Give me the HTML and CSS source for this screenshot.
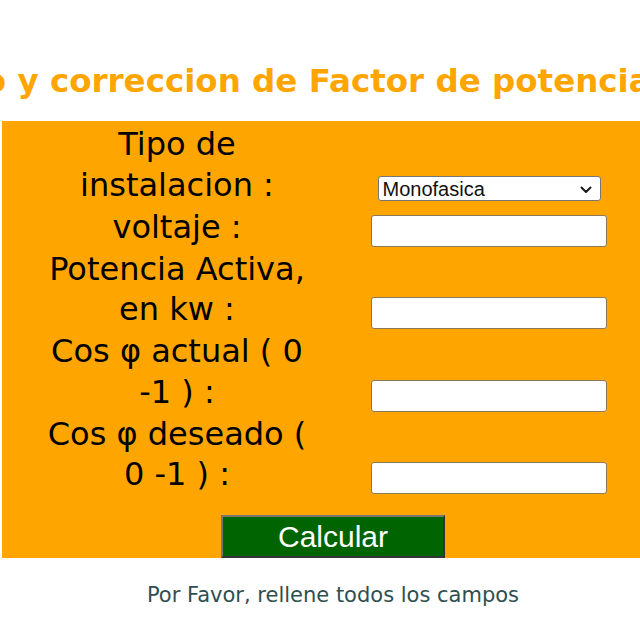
FILE: index.html
```html
<!DOCTYPE html>
<html lang="es">
<head>
<meta charset="utf-8">
<title>Calculo y correccion de Factor de potencia</title>
<link rel="stylesheet" href="styles.css">
</head>
<body>
<div class="page">
  <div class="head">
    <h1 class="title">Calculo y correccion de Factor de potencia</h1>
  </div>
  <form class="calc">
    <div class="row">
      <label class="lbl" for="tipo">Tipo de instalacion :</label>
      <div class="field select-wrap">
        <select id="tipo" class="sel"><option>Monofasica</option><option>Trifasica</option></select>
        <svg class="chev" width="12" height="8" viewBox="0 0 12 8" aria-hidden="true"><path d="M1.5 1.5 L6 6 L10.5 1.5" fill="none" stroke="#1a1a1a" stroke-width="2" stroke-linecap="round" stroke-linejoin="round"/></svg>
      </div>
    </div>
    <div class="row">
      <label class="lbl" for="volt">voltaje :</label>
      <div class="field"><input id="volt" class="inp" type="text"></div>
    </div>
    <div class="row">
      <label class="lbl" for="pot">Potencia Activa, en kw :</label>
      <div class="field"><input id="pot" class="inp" type="text"></div>
    </div>
    <div class="row">
      <label class="lbl" for="cosa">Cos φ actual ( 0 -1 ) :</label>
      <div class="field"><input id="cosa" class="inp" type="text"></div>
    </div>
    <div class="row">
      <label class="lbl" for="cosd">Cos φ deseado ( 0 -1 ) :</label>
      <div class="field"><input id="cosd" class="inp" type="text"></div>
    </div>
    <div class="actions">
      <button type="button" class="btn">Calcular</button>
    </div>
  </form>
  <p class="msg">Por Favor, rellene todos los campos</p>
</div>
</body>
</html>
```
FILE: styles.css
```css
html, body {
  margin: 0;
  padding: 0;
  overflow: hidden;
  background: #ffffff;
}
.page {
  width: 666px;
  font-family: "DejaVu Sans", Verdana, sans-serif;
}
.head {
  display: flex;
  justify-content: center;
  padding-top: 62px;
  padding-bottom: 21px;
  padding-right: 142px;
}
.title {
  flex: none;
  margin: 0;
  font-size: 32.5px;
  line-height: 38px;
  font-weight: bold;
  color: #ffa500;
  white-space: nowrap;
}
.calc {
  margin: 0 0 0 2px;
  width: 662px;
  background: #ffa500;
  padding-top: 3px;
}
.row {
  display: grid;
  grid-template-columns: 350px 274px;
  align-items: last baseline;
  padding-bottom: 1.5px;
}
.lbl {
  justify-self: center;
  width: 280px;
  text-align: center;
  font-size: 32px;
  line-height: 40.5px;
  color: #000;
}
.field {
  justify-self: center;
  display: flex;
  justify-content: center;
}
.select-wrap {
  position: relative;
}
.sel {
  width: 223px;
  height: 25px;
  padding: 0 0 0 4px;
  font-family: "Liberation Sans", Arial, sans-serif;
  font-size: 20px;
  border: 1px solid #767676;
  border-radius: 3px;
  background: #fff;
  color: #111;
  appearance: none;
  -webkit-appearance: none;
}
.chev {
  position: absolute;
  right: 9px;
  top: 50%;
  margin-top: -3px;
  pointer-events: none;
}
.inp {
  width: 236px;
  height: 32px;
  box-sizing: border-box;
  padding: 5px 2px 0;
  border: 1px solid #8a7a5a;
  border-radius: 3px;
  background: #fff;
}
.actions {
  display: flex;
  justify-content: center;
  padding-top: 19px;
}
.btn {
  width: 224px;
  height: 43px;
  box-sizing: border-box;
  background: #006400;
  color: #fff;
  font-family: "Liberation Sans", Arial, sans-serif;
  font-size: 30px;
  line-height: 1;
  border: 2px solid;
  border-color: #767676 #333 #333 #767676;
  padding: 0;
}
.msg {
  margin: 25px 0 0;
  text-align: center;
  font-size: 21px;
  color: #2f4f4f;
}
```
